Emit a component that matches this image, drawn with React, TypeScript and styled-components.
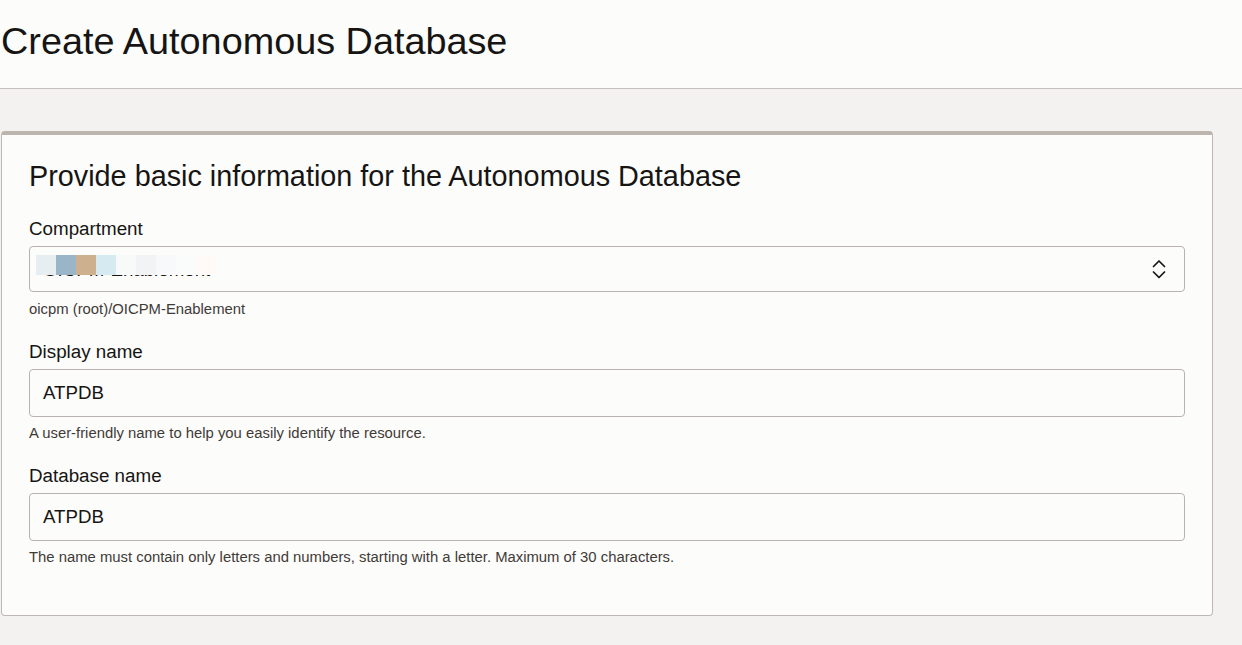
import React from "react";
import styled, { createGlobalStyle } from "styled-components";

const GlobalStyle = createGlobalStyle`
  html, body {
    margin: 0;
    padding: 0;
    background: #f3f2f1;
    font-family: "Liberation Sans", Arial, sans-serif;
    color: #161513;
  }
  * { box-sizing: border-box; }
`;

const Page = styled.div`
  width: 1242px;
  min-height: 645px;
  background: #f3f2f1;
`;

const Header = styled.header`
  height: 89px;
  padding: 19px 0 0 1px;
  background: #fcfcfb;
  border-bottom: 1px solid #c4c0bc;
`;

const Title = styled.h1`
  margin: 0;
  font-size: 37.8px;
  line-height: 44px;
  font-weight: 400;
  color: #161513;
`;

const Body = styled.main`
  padding: 42px 29px 30px 1px;
`;

const Card = styled.section`
  background: #fcfcfb;
  border: 1px solid #bdb8b3;
  border-top: 4px solid #bbb5ae;
  border-radius: 4px;
  padding: 23px 27px 49px 27px;
`;

const SectionTitle = styled.h2`
  margin: 0 0 23px 0;
  font-size: 28.8px;
  line-height: 36px;
  font-weight: 400;
`;

const Field = styled.div<{ $first?: boolean }>`
  display: flex;
  flex-direction: column;
  margin-top: ${(p) => (p.$first ? "0" : "22px")};
`;

const Label = styled.label`
  font-size: 18.8px;
  line-height: 24px;
  margin-bottom: 5px;
`;

const InputBox = styled.div<{ $h: number }>`
  position: relative;
  height: ${(p) => p.$h}px;
  border: 1px solid #b8b3ae;
  border-radius: 4px;
  background: #fcfcfb;
  display: flex;
  align-items: center;
  justify-content: space-between;
  padding: 0 18px 0 13px;
  font-size: 18.7px;
  overflow: hidden;
`;

const Value = styled.span`
  font-size: 18.7px;
  line-height: 22px;
  color: #161513;
`;

const Help = styled.div<{ $gap: number }>`
  margin-top: ${(p) => p.$gap}px;
  font-size: 14.85px;
  line-height: 18px;
  color: #3f3b37;
`;

const Redaction = styled.div`
  position: absolute;
  left: 6px;
  top: 8px;
  display: flex;
`;

const Pixel = styled.div<{ $c: string }>`
  width: 20px;
  height: 20px;
  background: ${(p) => p.$c};
`;

const SelectValue = styled.span`
  font-size: 18.7px;
  line-height: 22px;
  margin-top: 1px;
`;

const pixels = [
  "#e6eef2",
  "#9ab5c8",
  "#cdb08e",
  "#d6eaf2",
  "#f8fafa",
  "#f2f3f5",
  "#f8f9fb",
  "#fafbfb",
  "#fffaf8",
];

const Chevrons = () => (
  <svg width="14" height="20" viewBox="0 0 14 20" fill="none">
    <polyline
      points="1.5,7.5 7,2 12.5,7.5"
      stroke="#161513"
      strokeWidth="1.7"
      strokeLinecap="round"
      strokeLinejoin="round"
    />
    <polyline
      points="1.5,13 7,18.5 12.5,13"
      stroke="#161513"
      strokeWidth="1.7"
      strokeLinecap="round"
      strokeLinejoin="round"
    />
  </svg>
);

export default function App() {
  return (
    <Page>
      <GlobalStyle />
      <Header>
        <Title>Create Autonomous Database</Title>
      </Header>
      <Body>
        <Card>
          <SectionTitle>Provide basic information for the Autonomous Database</SectionTitle>

          <Field $first>
            <Label>Compartment</Label>
            <InputBox $h={46}>
              <SelectValue>OICPM-Enablement</SelectValue>
              <Redaction>
                {pixels.map((c, i) => (
                  <Pixel key={i} $c={c} />
                ))}
              </Redaction>
              <Chevrons />
            </InputBox>
            <Help $gap={8}>oicpm (root)/OICPM-Enablement</Help>
          </Field>

          <Field>
            <Label>Display name</Label>
            <InputBox $h={48}>
              <Value>ATPDB</Value>
            </InputBox>
            <Help $gap={7}>A user-friendly name to help you easily identify the resource.</Help>
          </Field>

          <Field>
            <Label>Database name</Label>
            <InputBox $h={48}>
              <Value>ATPDB</Value>
            </InputBox>
            <Help $gap={7}>
              The name must contain only letters and numbers, starting with a letter. Maximum of 30 characters.
            </Help>
          </Field>
        </Card>
      </Body>
    </Page>
  );
}
